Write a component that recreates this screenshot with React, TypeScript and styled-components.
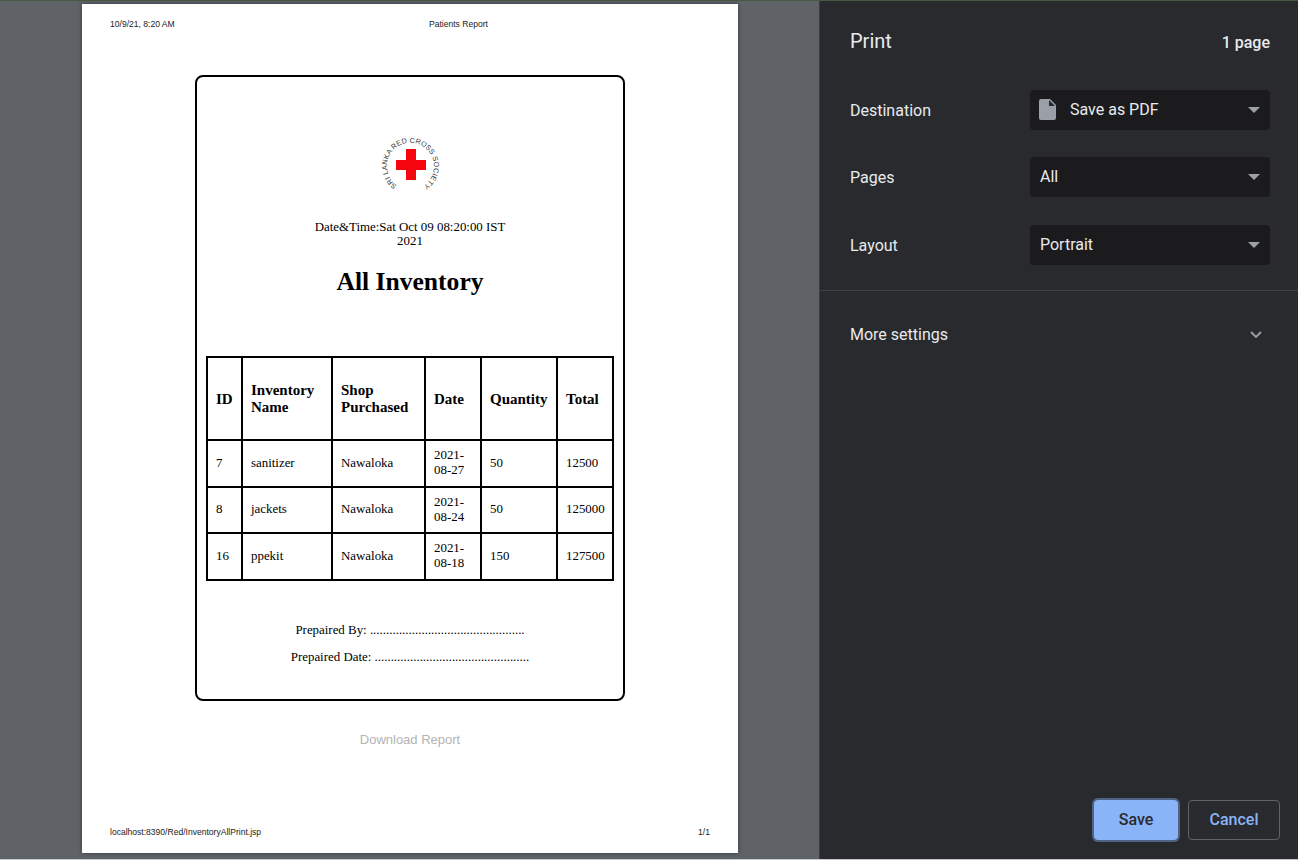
import styled, { createGlobalStyle } from 'styled-components';

const GlobalStyle = createGlobalStyle`
  html, body {
    margin: 0;
    padding: 0;
    background: #5f6368;
  }
`;

const Screen = styled.div`
  width: 1298px;
  height: 860px;
  overflow: hidden;
  display: flex;
  flex-direction: column;
  background: #5f6368;
`;

const TopStrip = styled.div`
  height: 1px;
  flex: none;
  background: #46583f;
`;

const BottomStrip = styled.div`
  height: 1px;
  flex: none;
  background: #c9cacb;
`;

const Main = styled.div`
  flex: 1;
  min-height: 0;
  display: flex;
`;

const Preview = styled.div`
  width: 819px;
  flex: none;
  padding: 3px 0 0 82px;
  box-sizing: border-box;
  background: #5f6368;
`;

const Sheet = styled.div`
  width: 656px;
  height: 849px;
  background: #fff;
  box-shadow: 0 0 4px rgba(0, 0, 0, 0.45);
  display: flex;
  flex-direction: column;
  align-items: center;
`;

const SheetLine = styled.div<{ $top?: boolean }>`
  align-self: stretch;
  height: 11px;
  flex: none;
  margin-top: ${p => (p.$top ? '15px' : '0')};
  padding: 0 28px;
  display: flex;
  justify-content: space-between;
  position: relative;
  font: 8.55px/11px "Liberation Sans", Arial, sans-serif;
  color: #222;
`;

const CenteredTitle = styled.span`
  position: absolute;
  left: 347px;
`;

const Report = styled.div`
  width: 430px;
  height: 626px;
  flex: none;
  box-sizing: border-box;
  margin-top: 45px;
  border: 2px solid #000;
  border-radius: 8px;
  display: flex;
  flex-direction: column;
  align-items: center;
  font-family: "Liberation Serif", "Times New Roman", serif;
  color: #000;
`;

const Logo = styled.svg`
  width: 60px;
  height: 60px;
  flex: none;
  margin-top: 58px;
`;

const DateLine = styled.div`
  width: 210px;
  margin-top: 25px;
  text-align: center;
  font-size: 12.9px;
  line-height: 14px;
`;

const Heading = styled.h1`
  margin: 19px 0 0;
  font-size: 25.6px;
  line-height: 30px;
  font-weight: bold;
`;

const Table = styled.table`
  width: 408px;
  margin-top: 59px;
  border-collapse: collapse;
  table-layout: fixed;
  font-size: 12.9px;
  line-height: 15px;
  border: 2px solid #000;

  th, td {
    border: 2px solid #000;
    padding: 0 8px;
    text-align: left;
    vertical-align: middle;
  }

  th {
    height: 80px;
    padding-top: 1px;
    font-size: 15px;
    line-height: 17px;
    font-weight: bold;
  }

  td {
    height: 44.6px;
  }
`;

const Col = styled.col<{ $width: number }>`
  width: ${p => p.$width}px;
`;

const Signature = styled.div<{ $first?: boolean }>`
  margin-top: ${p => (p.$first ? '42px' : '12px')};
  font-size: 12.9px;
  line-height: 15px;
  white-space: nowrap;
`;

const Download = styled.div`
  margin-top: 31px;
  font: 13px/16px "Liberation Sans", Arial, sans-serif;
  color: #b3b3b3;
`;

const FooterSpacer = styled.div`
  flex: 1;
`;

const FooterLine = styled(SheetLine)`
  margin-bottom: 15px;
`;

const Sidebar = styled.aside`
  flex: 1;
  display: flex;
  flex-direction: column;
  background: #292a2d;
  border-left: 1px solid #3c3d40;
  font-family: Roboto, "Liberation Sans", sans-serif;
  color: #e8eaed;
`;

const SideHeader = styled.header`
  height: 79px;
  padding: 0 28px 0 30px;
  box-sizing: border-box;
  display: flex;
  justify-content: space-between;
  align-items: center;
`;

const Title = styled.h2`
  margin: 0;
  font-size: 20px;
  font-weight: 400;
`;

const PageCount = styled.span`
  font-size: 16px;
  font-weight: 500;
  padding-top: 4px;
`;

const Settings = styled.div`
  padding: 10px 28px 25px 30px;
  display: flex;
  flex-direction: column;
  gap: 27px;
  border-bottom: 1px solid #3f4043;
`;

const Row = styled.div`
  display: flex;
  align-items: center;
  justify-content: space-between;

  ${Settings} > &:last-child {
    margin-top: 1px;
  }
`;

const Label = styled.span`
  font-size: 16px;
`;

const Select = styled.div`
  width: 240px;
  height: 40px;
  padding: 0 10px 1px;
  box-sizing: border-box;
  display: flex;
  align-items: center;
  gap: 14px;
  border-radius: 4px;
  background: #1b1b1d;
  font-size: 16px;
  position: relative;
`;

const FileIcon = styled.svg`
  margin-left: -1px;
  flex: none;
`;

const Caret = styled.span`
  position: absolute;
  right: 10px;
  top: 17px;
  width: 0;
  height: 0;
  border-left: 6px solid transparent;
  border-right: 6px solid transparent;
  border-top: 6px solid #9aa0a6;
`;

const MoreRow = styled(Row)`
  height: 87px;
  padding: 0 35px 0 30px;
`;

const Actions = styled.footer`
  margin-top: auto;
  padding: 0 18px 19px 0;
  display: flex;
  justify-content: flex-end;
  align-items: center;
  gap: 10px;
`;

const Button = styled.button<{ $primary?: boolean }>`
  width: ${p => (p.$primary ? '84px' : '92px')};
  height: 40px;
  box-sizing: border-box;
  padding: 0 0 2px;
  border-radius: 4px;
  border: 1px solid ${p => (p.$primary ? '#8ab4f8' : '#5f6368')};
  background: ${p => (p.$primary ? '#8ab4f8' : 'transparent')};
  box-shadow: ${p => (p.$primary ? '0 0 0 2px #4f6485' : 'none')};
  color: ${p => (p.$primary ? '#292a2d' : '#8ab4f8')};
  font: 500 16px Roboto, "Liberation Sans", sans-serif;
`;

const rows = [
  ['7', 'sanitizer', 'Nawaloka', '2021-08-27', '50', '12500'],
  ['8', 'jackets', 'Nawaloka', '2021-08-24', '50', '125000'],
  ['16', 'ppekit', 'Nawaloka', '2021-08-18', '150', '127500'],
];

const dots = '.'.repeat(48);

const App = () => (
  <Screen>
    <GlobalStyle />
    <TopStrip />
    <Main>
      <Preview>
        <Sheet>
          <SheetLine $top>
            <span>10/9/21, 8:20 AM</span>
            <CenteredTitle>Patients Report</CenteredTitle>
          </SheetLine>
          <Report>
            <Logo viewBox="0 0 60 60">
              <defs>
                <path id="ring" d="M17 50.500 A23.500 23.500 0 1 1 44 50.500" />
              </defs>
              <path d="M26 14h10v11h10v10H36v10H26V35H16V25h10z" fill="#f5060f" />
              <text fontFamily="Liberation Sans, sans-serif" fontSize="7.2" fill="#333">
                <textPath href="#ring" textLength="119" lengthAdjust="spacing">SRI LANKA RED CROSS SOCIETY</textPath>
              </text>
            </Logo>
            <DateLine>Date&amp;Time:Sat Oct 09 08:20:00 IST 2021</DateLine>
            <Heading>All Inventory</Heading>
            <Table>
              <colgroup>
                <Col $width={35} />
                <Col $width={90} />
                <Col $width={93} />
                <Col $width={56} />
                <Col $width={76} />
                <Col $width={56} />
              </colgroup>
              <thead>
                <tr>
                  <th>ID</th>
                  <th>Inventory Name</th>
                  <th>Shop Purchased</th>
                  <th>Date</th>
                  <th>Quantity</th>
                  <th>Total</th>
                </tr>
              </thead>
              <tbody>
                {rows.map(r => (
                  <tr key={r[0]}>
                    {r.map((c, i) => (
                      <td key={i}>{c}</td>
                    ))}
                  </tr>
                ))}
              </tbody>
            </Table>
            <Signature $first>Prepaired By: {dots}</Signature>
            <Signature>Prepaired Date: {dots}</Signature>
          </Report>
          <Download>Download Report</Download>
          <FooterSpacer />
          <FooterLine>
            <span>localhost:8390/Red/InventoryAllPrint.jsp</span>
            <span>1/1</span>
          </FooterLine>
        </Sheet>
      </Preview>
      <Sidebar>
        <SideHeader>
          <Title>Print</Title>
          <PageCount>1 page</PageCount>
        </SideHeader>
        <Settings>
          <Row>
            <Label>Destination</Label>
            <Select>
              <FileIcon width="17" height="21" viewBox="0 0 17 21">
                <path d="M2 0h9l6 6v13a2 2 0 0 1-2 2H2a2 2 0 0 1-2-2V2a2 2 0 0 1 2-2z" fill="#9aa0a6" />
                <path d="M10 1v6h6z" fill="#292a2d" />
              </FileIcon>
              <span>Save as PDF</span>
              <Caret />
            </Select>
          </Row>
          <Row>
            <Label>Pages</Label>
            <Select>
              All
              <Caret />
            </Select>
          </Row>
          <Row>
            <Label>Layout</Label>
            <Select>
              Portrait
              <Caret />
            </Select>
          </Row>
        </Settings>
        <MoreRow>
          <Label>More settings</Label>
          <svg width="14" height="9" viewBox="0 0 14 9">
            <path d="M2 2l5 5 5-5" fill="none" stroke="#9aa0a6" strokeWidth="1.8" />
          </svg>
        </MoreRow>
        <Actions>
          <Button $primary>Save</Button>
          <Button>Cancel</Button>
        </Actions>
      </Sidebar>
    </Main>
    <BottomStrip />
  </Screen>
);

export default App;
